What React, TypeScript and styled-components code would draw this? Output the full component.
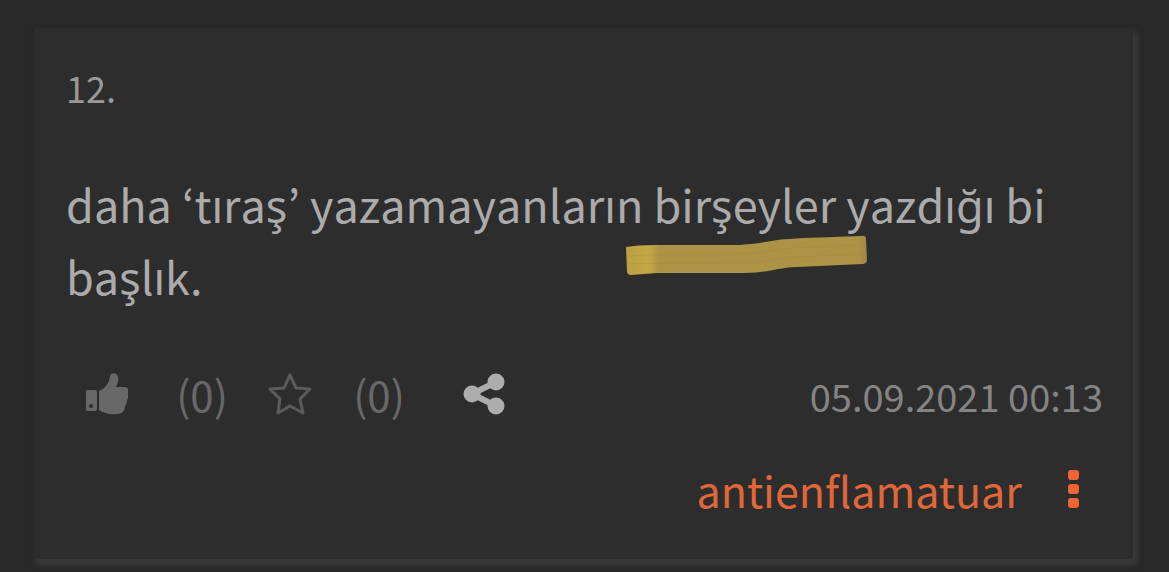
import React from "react";
import styled, { createGlobalStyle } from "styled-components";

const GlobalStyle = createGlobalStyle`
  * { box-sizing: border-box; }
  body {
    margin: 0;
    background: #282828;
    color: #ababab;
    font-family: "Noto Sans CJK KR", "Noto Sans", sans-serif;
  }
`;

const Page = styled.main`
  padding: 28px 36px 13px 34px;
`;

const Entry = styled.article`
  display: flex;
  flex-direction: column;
  padding: 33px 30px 38px 32px;
  background: #2d2d2d;
  border-radius: 3px;
  box-shadow: 3px 5px 5px 2px #383838;
`;

const Order = styled.span`
  font-size: 36px;
  line-height: 52px;
  color: #999999;
`;

const Body = styled.p`
  margin: 55px 0 0;
  font-size: 45px;
  line-height: 72px;
  font-kerning: none;
`;

const Marked = styled.span`
  position: relative;
`;

const Highlight = styled.svg`
  position: absolute;
  left: -30px;
  top: 62px;
  width: 246px;
  height: 44px;
  overflow: visible;
`;

const Toolbar = styled.div`
  display: flex;
  align-items: center;
  justify-content: space-between;
  margin-top: 52px;
  height: 60px;
  padding-left: 18px;
`;

const Actions = styled.div`
  display: flex;
  align-items: center;
`;

const IconButton = styled.button<{ $tone: string }>`
  display: flex;
  padding: 0;
  border: 0;
  background: none;
  color: ${(p) => p.$tone};
  cursor: pointer;
`;

const Count = styled.span<{ $before: number; $after: number }>`
  width: 52px;
  margin: 0 ${(p) => p.$after}px 0 ${(p) => p.$before}px;
  text-align: center;
  font-size: 42px;
  line-height: 60px;
  color: #686868;
`;

const DateText = styled.time`
  padding-top: 4px;
  font-size: 38px;
  line-height: 60px;
  color: #848484;
`;

const Footer = styled.footer`
  display: flex;
  align-items: center;
  justify-content: flex-end;
  gap: 46px;
  margin-top: 33px;
  padding-right: 24px;
`;

const Author = styled.a`
  font-size: 43px;
  line-height: 64px;
  color: #e0673a;
  text-decoration: none;
`;

export default function App() {
  return (
    <>
      <GlobalStyle />
      <Page>
        <Entry>
          <Order>12.</Order>
          <Body>
            daha ‘tıraş’ yazamayanların{" "}
            <Marked>
              birşeyler
              <Highlight viewBox="0 0 246 44" aria-hidden="true">
                <defs>
                  <linearGradient id="marker" x1="0" x2="1" y1="0" y2="0">
                    <stop offset="0" stopColor="#bda043" />
                    <stop offset="0.1" stopColor="#c2a647" />
                    <stop offset="0.14" stopColor="#ac9345" />
                    <stop offset="0.96" stopColor="#ac9345" />
                    <stop offset="1" stopColor="#a08843" />
                  </linearGradient>
                </defs>
                <path
                  d="M3 14Q14 12 32 12H112C140 11 146 7 166 6C195 4 222 4 238 3Q243 2 243 6L244 27Q244 30 240 31L174 34C152 35 150 39 122 40H34L8 42Q4 42 4 38Z"
                  fill="url(#marker)"
                />
                <g fill="none" stroke="#a18939" strokeOpacity="0.3">
                  <path d="M5 23Q28 21 112 21C142 21 148 16 170 15L242 12" />
                  <path d="M5 31Q28 30 122 30C146 29 150 25 172 24L242 21" />
                </g>
              </Highlight>
            </Marked>{" "}
            yazdığı bi{" "}
            başlık.
          </Body>
          <Toolbar>
            <Actions>
              <IconButton type="button" aria-label="Beğen" $tone="#686868">
                <svg width="44" height="44" viewBox="0 0 44 44" fill="currentColor">
                  <path
                    fillRule="evenodd"
                    d="M3 18H11Q13 18 13 20V37Q13 39 11 39H3Q2 39 2 37V20Q2 18 3 18ZM7 32A2 2 0 1 0 7 36A2 2 0 1 0 7 32Z"
                  />
                  <path d="M15 19C21 17 25 11 26 5C26 0 34 0 34 6C35 9 33 12 32 15H40C45 15 46 20 44 22C45 25 44 27 43 28C43 31 42 33 41 34C41 38 39 42 33 42C26 43 20 41 15 38Z" />
                </svg>
              </IconButton>
              <Count $before={48} $after={40}>(0)</Count>
              <IconButton type="button" aria-label="Favorilere ekle" $tone="#5b5b5b">
                <svg width="44" height="44" viewBox="0 0 44 44" fill="none">
                  <path
                    d="M22 3L28 16L42 17L32 27L35 41L22 34L10 41L12 27L2 17L16 16Z"
                    stroke="currentColor"
                    strokeWidth="3"
                    strokeLinejoin="round"
                  />
                </svg>
              </IconButton>
              <Count $before={41} $after={58}>(0)</Count>
              <IconButton type="button" aria-label="Paylaş" $tone="#adadad">
                <svg width="42" height="42" viewBox="0 0 42 42" fill="currentColor">
                  <path d="M33 9L9 21L33 33" fill="none" stroke="currentColor" strokeWidth="6" />
                  <circle cx="33" cy="9" r="8.5" />
                  <circle cx="9" cy="21" r="8.5" />
                  <circle cx="33" cy="33" r="8.5" />
                </svg>
              </IconButton>
            </Actions>
            <DateText dateTime="2021-09-05T00:13">05.09.2021 00:13</DateText>
          </Toolbar>
          <Footer>
            <Author href="#antienflamatuar">antienflamatuar</Author>
            <IconButton type="button" aria-label="Seçenekler" $tone="#ee6435">
              <svg width="11" height="38" viewBox="0 0 11 38" fill="currentColor">
                <rect width="11" height="10" rx="3" />
                <rect y="14" width="11" height="10" rx="3" />
                <rect y="28" width="11" height="10" rx="3" />
              </svg>
            </IconButton>
          </Footer>
        </Entry>
      </Page>
    </>
  );
}
